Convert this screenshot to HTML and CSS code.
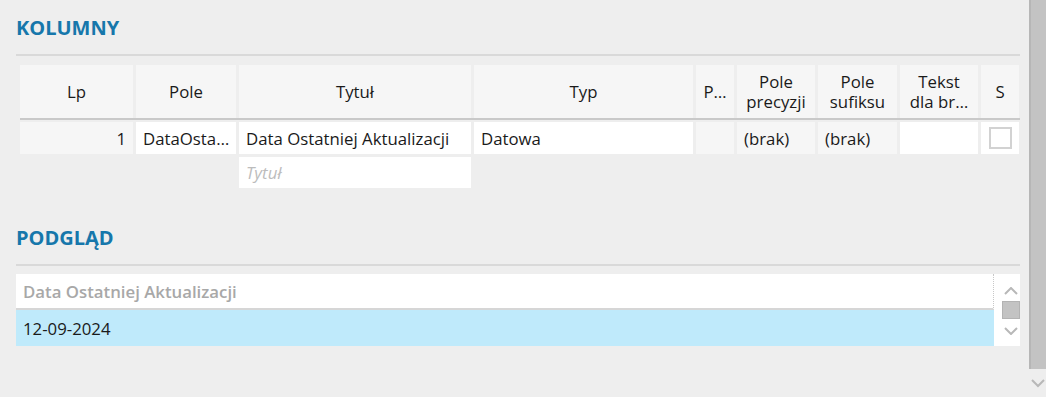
FILE: index.html
```html
<!DOCTYPE html>
<html lang="pl">
<head>
<meta charset="utf-8">
<title>Kolumny</title>
<link rel="stylesheet" href="styles.css">
</head>
<body>
<div class="app">
  <main class="content">
    <section class="section">
      <h2 class="section-title">KOLUMNY</h2>
      <div class="rule"></div>
      <div class="table">
        <div class="thead cols">
          <div class="th">Lp</div>
          <div class="th">Pole</div>
          <div class="th">Tytuł</div>
          <div class="th">Typ</div>
          <div class="th">P…</div>
          <div class="th"><span>Pole</span><span>precyzji</span></div>
          <div class="th"><span>Pole</span><span>sufiksu</span></div>
          <div class="th"><span>Tekst</span><span>dla br…</span></div>
          <div class="th">S</div>
        </div>
        <div class="row cols">
          <div class="td grey num">1</div>
          <div class="td">DataOsta…</div>
          <div class="td">Data Ostatniej Aktualizacji</div>
          <div class="td">Datowa</div>
          <div class="td grey"></div>
          <div class="td grey">(brak)</div>
          <div class="td grey">(brak)</div>
          <div class="td"></div>
          <div class="td check-cell"><span class="checkbox"></span></div>
        </div>
        <div class="row new-row cols">
          <div class="td placeholder">Tytuł</div>
        </div>
      </div>
    </section>
    <section class="section preview-section">
      <h2 class="section-title">PODGLĄD</h2>
      <div class="rule"></div>
      <div class="preview">
        <div class="pv-main">
          <div class="pv-head">Data Ostatniej Aktualizacji</div>
          <div class="pv-row">12-09-2024</div>
        </div>
        <div class="pv-scroll">
          <svg class="chev" width="14" height="8" viewBox="0 0 14 8"><path d="M1 7 L7 1 L13 7" fill="none" stroke="#b8b8b8" stroke-width="2"/></svg>
          <div class="pv-thumb"></div>
          <svg class="chev" width="14" height="8" viewBox="0 0 14 8"><path d="M1 1 L7 7 L13 1" fill="none" stroke="#b8b8b8" stroke-width="2"/></svg>
        </div>
      </div>
    </section>
  </main>
  <aside class="vscroll">
    <div class="vthumb"></div>
    <svg class="vchev" width="14" height="9" viewBox="0 0 14 9"><path d="M1 1 L7 7 L13 1" fill="none" stroke="#b8b8b8" stroke-width="2"/></svg>
  </aside>
</div>
</body>
</html>
```

FILE: styles.css
```css
* { box-sizing: border-box; }
html, body { margin: 0; padding: 0; }
body {
  background: #eeeeee;
  font-family: "Open Sans", "Noto Sans", "Liberation Sans", sans-serif;
  font-size: 16.8px;
  color: #1a1a1a;
  width: 1046px;
  height: 397px;
  overflow: hidden;
}
.app { display: flex; height: 397px; }
.content { flex: 1; padding: 16px 9px 0 16px; }
.section-title {
  margin: 0;
  font-size: 20px;
  line-height: 24px;
  font-weight: 700;
  color: #1677ab;
  letter-spacing: 0;
}
.rule { height: 2px; background: #d9d9d9; margin-top: 14px; }
.table { margin: 9px 0 0 4px; }
.cols {
  display: grid;
  grid-template-columns: 113px 100px 232px 219px 38px 78px 79px 78px 38px;
  column-gap: 3px;
}
.thead { border-bottom: 2px solid #c9c9c9; }
.th {
  height: 53px;
  background: #f6f6f6;
  display: flex;
  flex-direction: column;
  align-items: center;
  justify-content: center;
  text-align: center;
  line-height: 20px;
  color: #1a1a1a;
  white-space: nowrap;
  overflow: hidden;
}
.th span { display: block; height: 20px; line-height: 20px; }
.row { margin-top: 2px; }
.td {
  height: 32px;
  background: #ffffff;
  padding: 0 7px;
  display: flex;
  align-items: center;
  white-space: nowrap;
  overflow: hidden;
}
.td.grey { background: #f6f6f6; }
.td.num { justify-content: flex-end; }
.check-cell { justify-content: center; padding: 0; }
.checkbox {
  width: 23px; height: 22px;
  border: 2px solid #d2d2d2;
  background: #fff;
}
.new-row { margin-top: 3px; }
.new-row .td { grid-column: 3; height: 31px; }
.placeholder { color: #bcbcbc; font-style: italic; }

.preview-section { margin-top: 38px; }
.preview { display: flex; margin-top: 8px; height: 72px; }
.pv-main { flex: 1; display: flex; flex-direction: column; }
.pv-head {
  height: 36px;
  background: #fff;
  border-bottom: 2px solid #d6d6d6;
  border-right: 1px dotted #c8c8c8;
  padding: 0 7px;
  display: flex;
  align-items: center;
  color: #a8a8a8;
  font-weight: 600;
}
.pv-row {
  height: 36px;
  background: #bfeafb;
  padding: 0 7px;
  display: flex;
  align-items: center;
}
.pv-scroll {
  width: 26px;
  background: #fff;
  display: flex;
  flex-direction: column;
  align-items: center;
  padding: 13px 0 0 8px;
}
.chev { display: block; }
.pv-thumb {
  width: 18px; height: 18px;
  background: #c3c3c3;
  border: 1px solid #b3b3b3;
  margin: 6px 0 8px;
}
.vscroll {
  width: 17px;
  display: flex;
  flex-direction: column;
  align-items: center;
}
.vthumb {
  width: 17px;
  height: 369px;
  background: #c3c3c3;
  border-left: 2px solid #b6b6b6;
}
.vchev { margin-top: 10px; }
```
